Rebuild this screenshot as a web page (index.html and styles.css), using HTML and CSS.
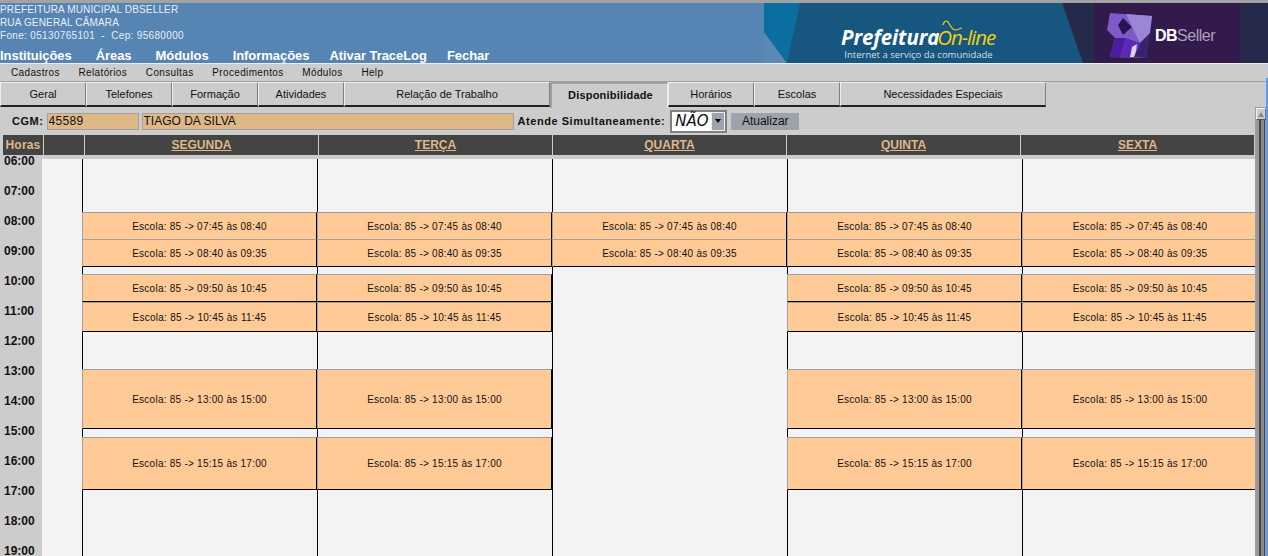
FILE: index.html
```html
<!DOCTYPE html>
<html lang="pt-BR">
<head>
    <meta charset="UTF-8">
    <title>Prefeitura On-line</title>
    <link rel="stylesheet" href="styles.css">
</head>
<body>

<div class="top-strip"></div>

<header class="header">
    <div class="header-left">
        <div class="inst">
            <div class="inst-line">PREFEITURA MUNICIPAL DBSELLER</div>
            <div class="inst-line">RUA GENERAL CÂMARA</div>
            <div class="inst-line inst-phone">Fone: 05130765101 &nbsp;-&nbsp; Cep: 95680000</div>
        </div>
        <nav class="main-nav">
            <a>Instituições</a>
            <a>Áreas</a>
            <a>Módulos</a>
            <a>Informações</a>
            <a class="nav-tight">Ativar TraceLog</a>
            <a class="nav-tight">Fechar</a>
        </nav>
    </div>
    <div class="banner">
        <svg class="banner-bg" width="504" height="60" viewBox="0 0 504 60">
            <defs>
                <filter id="soft"><feGaussianBlur stdDeviation="0.7"/></filter>
            </defs>
            <rect width="504" height="60" fill="#262a4a"/>
            <polygon points="0,0 298,0 319,60 0,60" fill="#17577f"/>
            <polygon points="0,0 36,0 23,60 0,29" fill="#0a6ea0"/>
            <polygon points="0,29 23,60 0,60" fill="#5c88b4"/>
            <rect x="330" width="146" height="60" fill="#331a4d"/>
            <path d="M179 22 C180 18 182 17 184 19 C186 22 188 27 191 27 C193 27 195 26 198 25" fill="none" stroke="#f0d010" stroke-width="1.2"/>
            <g filter="url(#soft)">
                <polygon points="346,10 388,13 385,35 382,55 346,54 351,35 343,27" fill="#7d5ac8"/>
                <polygon points="362,11 388,13 386,30 376,40 368,24" fill="#9b86d6"/>
                <polygon points="359,15 368,24 359,32 354,22" fill="#2a1650"/>
                <polygon points="351,35 362,35 356,54 346,54" fill="#4b1fa0"/>
                <polygon points="362,35 376,40 366,54 356,54" fill="#5a2cb4"/>
                <polygon points="368,44 373,41 371,54 366,54" fill="#d8d2ea"/>
                <polygon points="376,40 386,30 382,55 370,54" fill="#3a2270"/>
            </g>
        </svg>
        <div class="brand">
            <div class="brand-name">Prefeitura<span class="brand-online">On-line</span></div>
            <div class="brand-sub">Internet a serviço da comunidade</div>
        </div>
        <div class="dbseller"><b>DB</b>Seller</div>
    </div>
</header>

<nav class="menu-bar">
    <a>Cadastros</a>
    <a>Relatórios</a>
    <a>Consultas</a>
    <a>Procedimentos</a>
    <a>Módulos</a>
    <a>Help</a>
</nav>

<div class="tabs">
    <a class="tab w86">Geral</a>
    <a class="tab w86">Telefones</a>
    <a class="tab w86">Formação</a>
    <a class="tab w86">Atividades</a>
    <a class="tab w206">Relação de Trabalho</a>
    <a class="tab tab-active">Disponibilidade</a>
    <a class="tab w86">Horários</a>
    <a class="tab w86">Escolas</a>
    <a class="tab w206">Necessidades Especiais</a>
</div>

<div class="content">
    <div class="main">
        <form class="cgm-form">
            <label class="cgm-label">CGM:</label>
            <input class="field field-num" value="45589" readonly>
            <input class="field field-name" value="TIAGO DA SILVA" readonly>
            <label class="sim-label">Atende Simultaneamente:</label>
            <div class="combo">
                <span class="combo-value">NÃO</span>
                <span class="combo-btn"><i></i></span>
            </div>
            <button class="btn" type="button">Atualizar</button>
        </form>

        <div class="days-head">
            <div class="h-hours">Horas</div>
            <div class="h-blank"></div>
            <div class="h-day"><a>SEGUNDA</a></div>
            <div class="h-day"><a>TERÇA</a></div>
            <div class="h-day"><a>QUARTA</a></div>
            <div class="h-day"><a>QUINTA</a></div>
            <div class="h-day"><a>SEXTA</a></div>
        </div>

        <div class="grid">
            <div class="hours">
                <div>06:00</div><div>07:00</div><div>08:00</div><div>09:00</div>
                <div>10:00</div><div>11:00</div><div>12:00</div><div>13:00</div>
                <div>14:00</div><div>15:00</div><div>16:00</div><div>17:00</div>
                <div>18:00</div><div>19:00</div>
            </div>
            <div class="blank-col"></div>

            <div class="day">
                <div class="gap g53"></div>
                <div class="ev h27">Escola: 85 -&gt; 07:45 às 08:40</div>
                <div class="ev h28 end">Escola: 85 -&gt; 08:40 às 09:35</div>
                <div class="gap g7"></div>
                <div class="ev h28 end">Escola: 85 -&gt; 09:50 às 10:45</div>
                <div class="ev h30 end">Escola: 85 -&gt; 10:45 às 11:45</div>
                <div class="gap g37"></div>
                <div class="ev h60 end">Escola: 85 -&gt; 13:00 às 15:00</div>
                <div class="gap g8"></div>
                <div class="ev h53 end">Escola: 85 -&gt; 15:15 às 17:00</div>
                <div class="gap fill"></div>
            </div>
            <div class="day">
                <div class="gap g53"></div>
                <div class="ev h27">Escola: 85 -&gt; 07:45 às 08:40</div>
                <div class="ev h28 end">Escola: 85 -&gt; 08:40 às 09:35</div>
                <div class="gap g7"></div>
                <div class="ev h28 end">Escola: 85 -&gt; 09:50 às 10:45</div>
                <div class="ev h30 end">Escola: 85 -&gt; 10:45 às 11:45</div>
                <div class="gap g37"></div>
                <div class="ev h60 end">Escola: 85 -&gt; 13:00 às 15:00</div>
                <div class="gap g8"></div>
                <div class="ev h53 end">Escola: 85 -&gt; 15:15 às 17:00</div>
                <div class="gap fill"></div>
            </div>
            <div class="day">
                <div class="gap g53"></div>
                <div class="ev h27">Escola: 85 -&gt; 07:45 às 08:40</div>
                <div class="ev h28 end">Escola: 85 -&gt; 08:40 às 09:35</div>
                <div class="gap fill"></div>
            </div>
            <div class="day">
                <div class="gap g53"></div>
                <div class="ev h27">Escola: 85 -&gt; 07:45 às 08:40</div>
                <div class="ev h28 end">Escola: 85 -&gt; 08:40 às 09:35</div>
                <div class="gap g7"></div>
                <div class="ev h28 end">Escola: 85 -&gt; 09:50 às 10:45</div>
                <div class="ev h30 end">Escola: 85 -&gt; 10:45 às 11:45</div>
                <div class="gap g37"></div>
                <div class="ev h60 end">Escola: 85 -&gt; 13:00 às 15:00</div>
                <div class="gap g8"></div>
                <div class="ev h53 end">Escola: 85 -&gt; 15:15 às 17:00</div>
                <div class="gap fill"></div>
            </div>
            <div class="day day-last">
                <div class="gap g53"></div>
                <div class="ev h27">Escola: 85 -&gt; 07:45 às 08:40</div>
                <div class="ev h28 end">Escola: 85 -&gt; 08:40 às 09:35</div>
                <div class="gap g7"></div>
                <div class="ev h28 end">Escola: 85 -&gt; 09:50 às 10:45</div>
                <div class="ev h30 end">Escola: 85 -&gt; 10:45 às 11:45</div>
                <div class="gap g37"></div>
                <div class="ev h60 end">Escola: 85 -&gt; 13:00 às 15:00</div>
                <div class="gap g8"></div>
                <div class="ev h53 end">Escola: 85 -&gt; 15:15 às 17:00</div>
                <div class="gap fill"></div>
            </div>
        </div>
    </div>

    <div class="scrollbar">
        <div class="sb-arrow"><i></i></div>
        <div class="sb-track"></div>
    </div>
</div>

<div class="window-edge"></div>

</body>
</html>
```
FILE: styles.css
```css
html, body {
    height: 100%;
}
body {
    margin: 0;
    background: #cccccc;
    font-family: "Liberation Sans", Arial, sans-serif;
    font-size: 11px;
    color: #111;
    overflow: hidden;
    display: flex;
    flex-direction: column;
}
a {
    cursor: pointer;
}
.top-strip {
    height: 3px;
    background: #a3a3a3;
    flex: none;
}

/* header */
.header {
    height: 60px;
    flex: none;
    display: flex;
    justify-content: space-between;
    background: #5785b3;
}
.inst {
    color: #e8eef5;
    font-size: 10px;
    line-height: 13px;
}
.inst-line {
    letter-spacing: 0.15px;
}
.inst-phone {
    letter-spacing: 0.33px;
}
.main-nav {
    display: flex;
    gap: 24px;
    padding-top: 6px;
    font-size: 13px;
    font-weight: bold;
    color: #fff;
    line-height: 15px;
    letter-spacing: -0.05px;
}
.main-nav .nav-tight {
    margin-left: -4px;
}
.banner {
    width: 504px;
    height: 60px;
    position: relative;
    overflow: hidden;
}
.banner-bg {
    display: block;
}
.brand {
    position: absolute;
    left: 74px;
    top: 23px;
    width: 160px;
    text-align: center;
}
.brand-name {
    font-family: "Open Sans", sans-serif;
    font-weight: bold;
    font-style: italic;
    font-size: 20.5px;
    line-height: 23px;
    color: #fff;
    white-space: nowrap;
    letter-spacing: -0.1px;
}
.brand-online {
    font-weight: normal;
    color: #f0d010;
    letter-spacing: -1.1px;
    margin-left: -2px;
}
.brand-sub {
    font-family: "Open Sans", sans-serif;
    font-size: 9.5px;
    line-height: 11px;
    color: #d5dfe8;
    white-space: nowrap;
    padding-left: 1px;
}
.dbseller {
    position: absolute;
    left: 391px;
    top: 24px;
    font-size: 16px;
    letter-spacing: -0.5px;
    color: #aaa0bb;
}
.dbseller b {
    color: #fff;
}

/* menu */
.menu-bar {
    flex: none;
    height: 17px;
    border-top: 1px solid #eeeeee;
    border-bottom: 1px solid #a0a0a0;
    display: flex;
    gap: 18.8px;
    padding-left: 11px;
    line-height: 17px;
    font-size: 10px;
    letter-spacing: 0.35px;
    color: #111;
}

/* tabs */
.tabs {
    flex: none;
    height: 25px;
    display: flex;
    align-items: flex-start;
}
.tab {
    box-sizing: border-box;
    height: 25px;
    text-align: center;
    line-height: 22px;
    border-top: 1px solid #eeeeee;
    border-left: 1px solid #eeeeee;
    border-right: 1px solid #808080;
    border-bottom: 2px solid #222;
}
.w86 { width: 86px; }
.w206 { width: 206px; }
.tab-active {
    width: 118px;
    height: 26px;
    padding-left: 2px;
    font-weight: bold;
    line-height: 23px;
    letter-spacing: 0.2px;
    border-top: 2px solid #a0a0a0;
    border-left: 2px solid #a0a0a0;
    border-right: 1px solid #eeeeee;
    border-bottom: 0;
}

.content {
    flex: 1;
    min-height: 0;
    display: flex;
}
.main {
    flex: 1;
    min-width: 0;
    overflow: hidden;
}

/* form */
.cgm-form {
    margin: 0;
    height: 28px;
    display: flex;
    align-items: center;
    white-space: nowrap;
}
.cgm-label, .sim-label {
    font-weight: bold;
    letter-spacing: 0.55px;
}
.cgm-label {
    margin-left: 12px;
    margin-right: 3px;
}
.field {
    box-sizing: border-box;
    height: 17px;
    border: 1px solid #a0a0a0;
    background: #deb887;
    font-family: inherit;
    font-size: 12px;
    padding: 0 1px;
    color: #111;
}
.field-num {
    width: 92px;
    letter-spacing: 0.3px;
}
.field-name {
    width: 372px;
    margin-left: 3px;
}
.sim-label {
    margin-left: 4px;
    margin-right: 5px;
}
.combo {
    box-sizing: border-box;
    width: 57px;
    height: 23px;
    border: 2px solid #808080;
    background: #fff;
    display: flex;
}
.combo-value {
    flex: 1;
    font-family: "DejaVu Sans", sans-serif;
    font-style: italic;
    font-size: 15px;
    line-height: 19px;
    padding-left: 3px;
}
.combo-btn {
    width: 14px;
    background: #9da3ad;
    border: 1px solid #eee;
    box-sizing: border-box;
    display: flex;
    align-items: center;
    justify-content: center;
}
.combo-btn i {
    border-left: 3px solid transparent;
    border-right: 3px solid transparent;
    border-top: 4px solid #000;
}
.btn {
    box-sizing: border-box;
    width: 68px;
    height: 17px;
    margin-left: 4px;
    padding: 0;
    border: 1px solid #a0a4aa;
    background: #9da3ad;
    font-family: inherit;
    font-size: 12px;
    color: #111;
}

/* week header */
.days-head {
    height: 20px;
    background: #444444;
    display: flex;
    margin: 0 1px 4px 3px;
    line-height: 20px;
    font-size: 12px;
    font-weight: bold;
    text-align: center;
    color: #deb887;
}
.h-hours {
    width: 40px;
    letter-spacing: 0.2px;
}
.h-blank {
    width: 41px;
    border-left: 1px solid #cccccc;
    box-sizing: border-box;
}
.h-day {
    width: 234px;
    box-sizing: border-box;
    border-left: 1px solid #cccccc;
}
.h-day a {
    text-decoration: underline;
}

/* grid */
.grid {
    display: flex;
    height: 400px;
}
.hours {
    width: 42px;
    flex: none;
    font-size: 12px;
    font-weight: bold;
    padding-left: 4px;
    box-sizing: border-box;
}
.hours div {
    height: 30px;
    line-height: 5px;
}
.blank-col {
    width: 40px;
    flex: none;
    background: #f3f3f3;
}
.day {
    width: 235px;
    flex: none;
    display: flex;
    flex-direction: column;
}
.day-last {
    width: 233px;
}
.day-last .ev {
    border-right: 0;
    padding-left: 2px;
}
.gap {
    background: #f3f3f3;
    border-left: 1px solid #000;
}
.g53 { height: 53px; }
.g7 { height: 7px; }
.g8 { height: 8px; }
.g37 { height: 37px; }
.fill { flex: 1; }
.ev {
    box-sizing: border-box;
    background: #ffca96;
    border-top: 1px solid #a0a0a0;
    border-left: 1px solid #a0a0a0;
    border-right: 1px solid #000;
    display: flex;
    align-items: center;
    justify-content: center;
    white-space: nowrap;
    font-size: 10px;
    letter-spacing: 0.25px;
}
.end {
    border-bottom: 1px solid #000;
}
.h27 { height: 27px; }
.h28 { height: 28px; }
.h30 { height: 30px; }
.h53 { height: 53px; }
.h60 { height: 60px; }

/* scrollbar */
.scrollbar {
    width: 11px;
    flex: none;
    box-sizing: border-box;
    border-left: 1px solid #a0a0a0;
    border-top: 1px solid #a0a0a0;
    display: flex;
    flex-direction: column;
    margin-right: 2px;
}
.sb-arrow {
    height: 12px;
    flex: none;
    box-sizing: border-box;
    background: #ccc;
    border: 1px solid #eee;
    border-right-color: #777;
    border-bottom-color: #555;
    display: flex;
    justify-content: center;
    align-items: center;
}
.sb-arrow i {
    border-left: 3px solid transparent;
    border-right: 3px solid transparent;
    border-bottom: 5px solid #888;
}
.sb-track {
    flex: 1;
    background: linear-gradient(to right, #999 0 3px, #444 3px 5px, #888 5px 8px, #444 8px 9px, #999 9px);
}

/* blue edge of the window behind the page */
.window-edge {
    position: absolute;
    top: 78px;
    right: 0;
    bottom: 0;
    width: 2px;
    background: #5b9bf0;
}
```
